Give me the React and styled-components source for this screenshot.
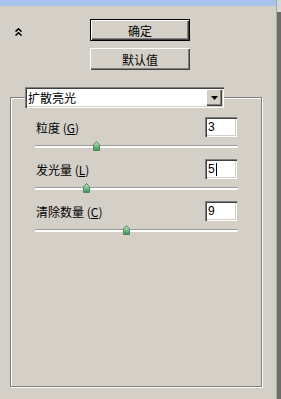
import React from 'react';
import styled, { createGlobalStyle } from 'styled-components';

const GlobalStyle = createGlobalStyle`
  html, body {
    margin: 0;
    padding: 0;
    background: #d4d0c8;
  }
  body {
    font-family: "Noto Sans CJK SC", "Liberation Sans", sans-serif;
    font-size: 12px;
    color: #000;
  }
`;

const Page = styled.div`
  display: flex;
  width: 281px;
  height: 399px;
  overflow: hidden;
`;

const Main = styled.div`
  width: 276px;
  display: flex;
  flex-direction: column;
`;

const Edge = styled.div`
  flex: 1;
  border-left: 1px solid #a8a8a8;
  background: linear-gradient(#d8d8d8 0 12px, #6c6c6c 12px);
`;

const TopStrip = styled.div`
  height: 6px;
  background: #a8c4ee;
`;

const Header = styled.div`
  display: flex;
  padding-top: 13px;
`;

const ChevronCell = styled.div`
  width: 90px;
  padding: 3px 0 0 15px;
  box-sizing: border-box;
`;

const ButtonStack = styled.div`
  display: flex;
  flex-direction: column;
  gap: 7px;
`;

const Button = styled.button`
  width: 100px;
  height: 22px;
  padding: 0;
  margin: 0;
  font: inherit;
  font-size: 12px;
  color: #000;
  background: #d4d0c8;
  border: ${p => (p.$default ? '1px solid #000' : 'none')};
  box-shadow: inset 1px 1px 0 #fff, inset -1px -1px 0 #404040,
    inset -2px -2px 0 #808080;
  display: flex;
  align-items: center;
  justify-content: center;
`;

const Group = styled.div`
  margin: 27px 0 0 10px;
  width: 252px;
  height: 290px;
  box-sizing: border-box;
  border: 1px solid #808080;
  box-shadow: inset 1px 1px 0 #fff, 1px 1px 0 #fff;
`;

const Select = styled.div`
  margin: -11px 0 0 14px;
  width: 199px;
  height: 21px;
  box-sizing: border-box;
  background: #fff;
  display: flex;
  align-items: center;
  padding: 0 2px 0 3px;
  box-shadow: inset 1px 1px 0 #808080, inset 2px 2px 0 #404040,
    inset -1px -1px 0 #fff, inset -2px -2px 0 #d4d0c8;
`;

const SelectText = styled.span`
  flex: 1;
  line-height: 17px;
`;

const ArrowButton = styled.div`
  width: 16px;
  height: 17px;
  background: #d4d0c8;
  display: flex;
  align-items: center;
  justify-content: center;
  box-shadow: inset 1px 1px 0 #fff, inset -1px -1px 0 #404040,
    inset -2px -2px 0 #808080;
`;

const Rows = styled.div`
  margin-top: 9px;
  display: flex;
  flex-direction: column;
`;

const Row = styled.div`
  display: flex;
  align-items: center;
  justify-content: space-between;
  padding: 0 24px 0 25px;
  height: 20px;
`;

const Label = styled.span`
  white-space: pre;
  u {
    text-decoration: underline;
  }
`;

const Field = styled.div`
  width: 32px;
  height: 20px;
  box-sizing: border-box;
  background: #fff;
  padding: 0 0 0 3px;
  display: flex;
  align-items: center;
  font-family: "Liberation Sans", sans-serif;
  font-size: 12px;
  box-shadow: inset 1px 1px 0 #808080, inset 2px 2px 0 #404040,
    inset -1px -1px 0 #fff, inset -2px -2px 0 #d4d0c8;
`;

const Caret = styled.span`
  display: inline-block;
  width: 1px;
  height: 13px;
  background: #000;
  margin-left: 1px;
`;

const SliderBlock = styled.div`
  height: 22px;
  padding: 8px 23px 0 24px;
  box-sizing: border-box;
`;

const Track = styled.div`
  position: relative;
  height: 2px;
  border-top: 1px solid #9a9a9a;
  background: #fff;
  border-radius: 1px;
`;

const Thumb = styled.svg`
  position: absolute;
  top: -5px;
  margin-left: -3px;
`;

const sliders = [
  { name: '粒度', key: 'G', value: '3', pct: 30 },
  { name: '发光量', key: 'L', value: '5', pct: 25, caret: true },
  { name: '清除数量', key: 'C', value: '9', pct: 45 },
];

function Chevrons() {
  return (
    <svg width="7" height="8" viewBox="0 0 7 8">
      <path
        d="M0.5 3.6 L3.5 0.8 L6.5 3.6 M0.5 7.6 L3.5 4.8 L6.5 7.6"
        stroke="#000"
        strokeWidth="1.5"
        fill="none"
      />
    </svg>
  );
}

function SliderThumb({ id, pct }) {
  return (
    <Thumb width="7" height="10" viewBox="0 0 7 10" style={{ left: `${pct}%` }}>
      <defs>
        <linearGradient id={id} x1="0" y1="0" x2="0" y2="1">
          <stop offset="0" stopColor="#c8ecd0" />
          <stop offset="0.5" stopColor="#7cc08e" />
          <stop offset="1" stopColor="#3f8a55" />
        </linearGradient>
      </defs>
      <polygon
        points="0.5,4 3.5,0.5 6.5,4 6.5,9.5 0.5,9.5"
        fill={`url(#${id})`}
        stroke="#4d8a60"
        strokeWidth="1"
      />
    </Thumb>
  );
}

export default function App() {
  return (
    <>
      <GlobalStyle />
      <Page>
        <Main>
          <TopStrip />
          <Header>
            <ChevronCell>
              <Chevrons />
            </ChevronCell>
            <ButtonStack>
              <Button $default>确定</Button>
              <Button>默认值</Button>
            </ButtonStack>
          </Header>
          <Group>
            <Select>
              <SelectText>扩散亮光</SelectText>
              <ArrowButton>
                <svg width="7" height="4" viewBox="0 0 7 4">
                  <polygon points="0,0 7,0 3.5,4" fill="#000" />
                </svg>
              </ArrowButton>
            </Select>
            <Rows>
              {sliders.map((s, i) => (
                <React.Fragment key={s.key}>
                  <Row>
                    <Label>
                      {s.name} (<u>{s.key}</u>)
                    </Label>
                    <Field>
                      {s.value}
                      {s.caret && <Caret />}
                    </Field>
                  </Row>
                  <SliderBlock>
                    <Track>
                      <SliderThumb id={`thumb${i}`} pct={s.pct} />
                    </Track>
                  </SliderBlock>
                </React.Fragment>
              ))}
            </Rows>
          </Group>
        </Main>
        <Edge />
      </Page>
    </>
  );
}
